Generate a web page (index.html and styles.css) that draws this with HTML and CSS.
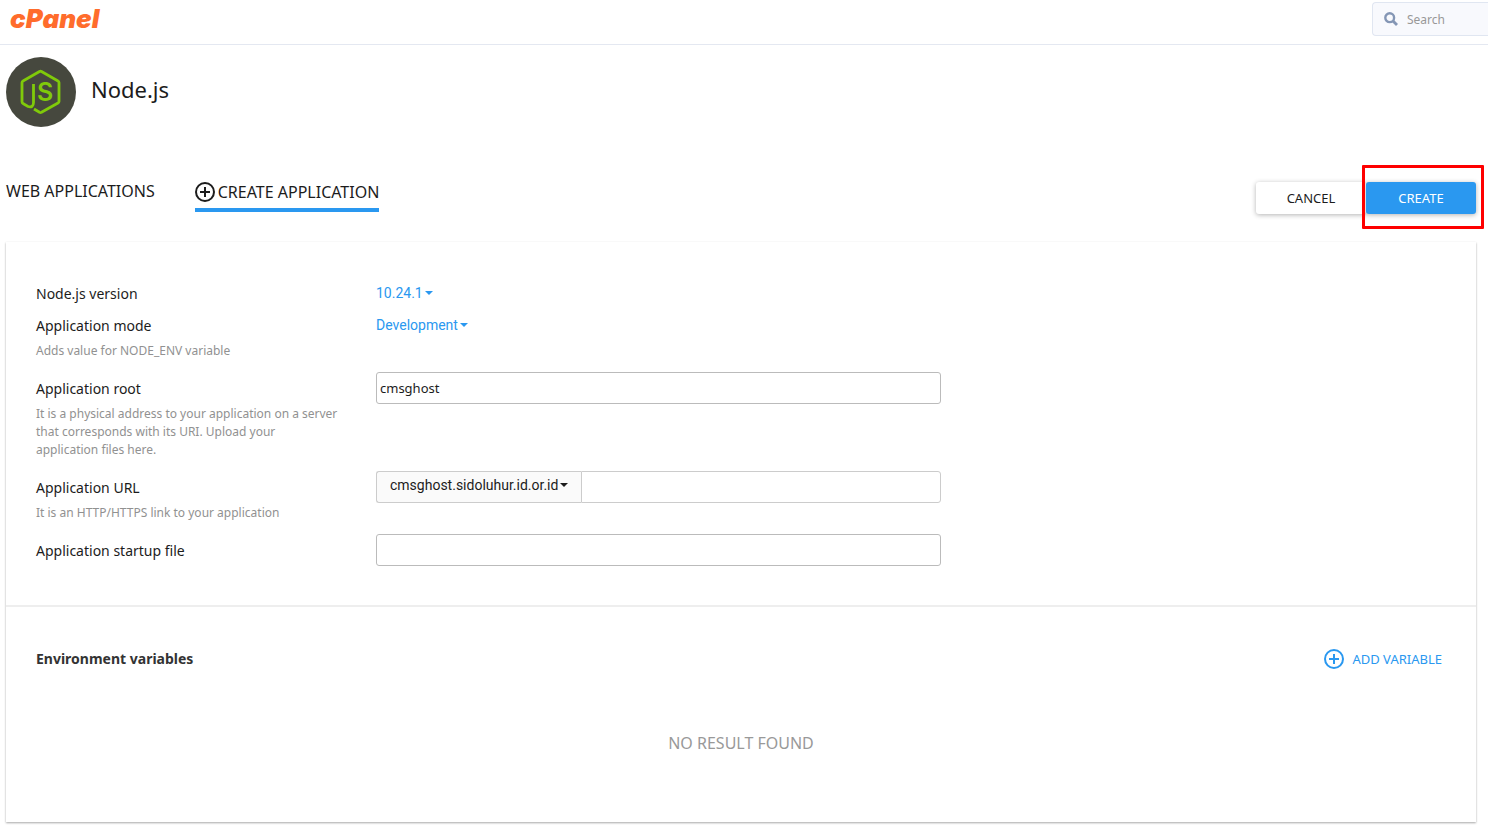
FILE: index.html
```html
<!DOCTYPE html>
<html lang="en">
<head>
<meta charset="UTF-8">
<title>cPanel - Node.js</title>
<meta name="viewport" content="width=device-width, initial-scale=1">
<link rel="stylesheet" href="styles.css">
</head>

<body>

<header class="topbar">
	<a class="logo" href="#">cPanel</a>
	<form class="search">
		<svg class="search-icon" viewBox="0 0 14 14" aria-hidden="true">
			<circle cx="5.7" cy="5.7" r="4.4" fill="none" stroke="currentColor" stroke-width="2.4"/>
			<path d="M9 9l4 4" stroke="currentColor" stroke-width="2.8"/>
		</svg>
		<input type="text" class="search-input" placeholder="Search" aria-label="Search">
	</form>
</header>

<main class="page">

	<div class="page-title">
		<svg class="app-icon" viewBox="0 0 70 70" aria-hidden="true">
			<circle cx="35" cy="35" r="35" fill="#46483e"/>
			<path d="M27.500 27V45.500Q27.500 51 22 49.500L17 46.500Q16 46 16 44.500V25.500Q16 24.500 17 24L33.500 14.500Q34.500 14 35.500 14.500L52 24Q53 24.500 53 25.500V44.500Q53 45.500 52 46L35.500 55.300Q34.500 55.800 33.500 55.300L28 52" fill="none" stroke="#80ca0a" stroke-width="2.800"/>
			<text class="app-icon-text" x="31" y="44">S</text>
		</svg>
		<h1>Node.js</h1>
	</div>

	<div class="toolbar">
		<nav class="tabs">
			<a class="tab" href="#">WEB APPLICATIONS</a>
			<a class="tab active" href="#">
				<svg class="plus" viewBox="0 0 20 20" aria-hidden="true">
					<circle cx="10" cy="10" r="9"/>
					<path d="M10 5v10M5 10h10"/>
				</svg>
				CREATE APPLICATION
			</a>
		</nav>
		<div class="buttons">
			<button type="button" class="btn">CANCEL</button>
			<div class="highlight">
				<button type="submit" form="appForm" class="btn btn-primary">CREATE</button>
			</div>
		</div>
	</div>

	<div class="panel">
		<form id="appForm" class="app-form">

			<div class="row">
				<div class="desc">
					<label for="version">Node.js version</label>
				</div>
				<div class="field">
					<span class="dropdown">
						<select id="version"><option>10.24.1</option></select>
					</span>
				</div>
			</div>

			<div class="row">
				<div class="desc">
					<label for="mode">Application mode</label>
					<p>Adds value for NODE_ENV variable</p>
				</div>
				<div class="field">
					<span class="dropdown">
						<select id="mode"><option>Development</option><option>Production</option></select>
					</span>
				</div>
			</div>

			<div class="row">
				<div class="desc">
					<label for="root">Application root</label>
					<p>It is a physical address to your application on a server that corresponds with its URI. Upload your application files here.</p>
				</div>
				<div class="field">
					<input type="text" id="root" class="textbox" value="cmsghost">
				</div>
			</div>

			<div class="row">
				<div class="desc">
					<label for="url">Application URL</label>
					<p>It is an HTTP/HTTPS link to your application</p>
				</div>
				<div class="field url-group">
					<span class="dropdown domain">
						<select aria-label="Domain"><option>cmsghost.sidoluhur.id.or.id</option></select>
					</span>
					<input type="text" id="url" class="textbox">
				</div>
			</div>

			<div class="row">
				<div class="desc">
					<label for="startup">Application startup file</label>
				</div>
				<div class="field">
					<input type="text" id="startup" class="textbox">
				</div>
			</div>

		</form>

		<section class="env">
			<div class="env-head">
				<h2>Environment variables</h2>
				<button type="button" class="add">
					<svg class="plus" viewBox="0 0 20 20" aria-hidden="true">
						<circle cx="10" cy="10" r="9"/>
						<path d="M10 5v10M5 10h10"/>
					</svg>
					ADD VARIABLE
				</button>
			</div>
			<p class="empty">NO RESULT FOUND</p>
		</section>
	</div>

</main>

</body>
</html>
```
FILE: styles.css
```css
* {
	box-sizing: border-box;
}

body {
	margin: 0;
	background: #fff;
	color: #1c1c1c;
	font-family: "Noto Sans", sans-serif;
	font-size: 14px;
	line-height: 20px;
}

h1, h2, p {
	margin: 0;
}

a {
	color: inherit;
	text-decoration: none;
}

button, input, select {
	font: inherit;
	color: inherit;
}

/* top bar */
.topbar {
	display: flex;
	justify-content: space-between;
	height: 45px;
	padding: 2px 0 0 10px;
	border-bottom: 1px solid #e4e8f1;
}

.logo {
	color: #ff6c2c;
	font-family: Inter, sans-serif;
	font-size: 26px;
	font-style: italic;
	font-weight: 900;
	line-height: 34px;
}

.search {
	display: flex;
	align-items: center;
	gap: 9px;
	width: 116px;
	height: 34px;
	padding-left: 11px;
	background: #f8f9fd;
	border: 1px solid #e0e6f1;
	border-right: 0;
	border-radius: 4px 0 0 4px;
}

.search-icon {
	flex: none;
	width: 14px;
	height: 14px;
	color: #8496b5;
}

.search-input {
	width: 100%;
	min-width: 0;
	padding: 2px 0 0;
	border: 0;
	background: none;
	font-size: 12px;
}

.search-input::placeholder {
	color: #989898;
}

/* title */
.page {
	padding: 12px 12px 5px 6px;
}

.page-title {
	display: flex;
	gap: 15px;
	height: 70px;
}

.app-icon {
	width: 70px;
	height: 70px;
}

.app-icon-text {
	fill: #80ca0a;
	font-family: Inter, sans-serif;
	font-size: 25px;
	font-weight: 600;
}

h1 {
	font-size: 22px;
	font-weight: 400;
	line-height: 64px;
}

/* tabs and buttons */
.toolbar {
	display: flex;
	justify-content: space-between;
	align-items: flex-start;
	padding: 53px 0 28px;
}

.tabs {
	display: flex;
	gap: 40px;
	font-size: 16px;
	line-height: 22px;
}

.tab {
	display: flex;
	align-items: center;
	gap: 3px;
	height: 32px;
	padding-bottom: 10px;
}

.tab.active {
	border-bottom: 4px solid #2a98f0;
	padding-bottom: 4px;
}

.plus {
	width: 20px;
	height: 20px;
	fill: none;
	stroke: currentColor;
	stroke-width: 2;
}

.buttons {
	display: flex;
	margin-top: 2px;
}

.btn {
	display: block;
	width: 110px;
	height: 32px;
	padding: 0;
	border: 0;
	border-radius: 3px;
	background: #fff;
	box-shadow: 0 1px 5px rgba(0, 0, 0, 0.3);
	font-size: 13px;
}

.btn-primary {
	background: #2a98f0;
	color: #fff;
}

.highlight {
	position: relative;
}

.highlight::after {
	content: "";
	position: absolute;
	top: -17px;
	right: -8px;
	bottom: -15px;
	left: -4px;
	border: 3px solid #fe0000;
	border-radius: 1px;
	pointer-events: none;
}

/* panel */
.panel {
	min-height: 580px;
	background: #fff;
	box-shadow: 0 1px 2px rgba(0, 0, 0, 0.35);
}

.app-form {
	padding: 35px 30px 39px;
	border-bottom: 2px solid #eee;
}

.row {
	display: grid;
	grid-template-columns: 304px minmax(0, 565px);
	column-gap: 36px;
}

.desc {
	padding: 7px 0 5px;
}

.desc label {
	display: block;
}

.desc p {
	padding: 6px 0 7px;
	color: #919191;
	font-size: 12px;
	line-height: 18px;
}

.dropdown {
	display: inline-flex;
	align-items: center;
	gap: 2px;
	height: 32px;
	color: #2a98f0;
	font-family: Roboto, sans-serif;
}

.dropdown select {
	appearance: none;
	field-sizing: content;
	padding: 0;
	border: 0;
	background: none;
}

.dropdown::after {
	content: "";
	border: 4px solid transparent;
	border-top-color: currentColor;
	border-bottom: 0;
}

.textbox {
	display: block;
	width: 100%;
	height: 32px;
	padding: 0 3px;
	border: 1px solid #bbb;
	border-radius: 3px;
	background: #fff;
	font-size: 13px;
}

.url-group {
	display: flex;
}

.domain {
	padding: 0 13px 4px;
	border: 1px solid #ccc;
	border-right: 0;
	border-radius: 3px 0 0 3px;
	background: #fafafa;
	color: #1c1c1c;
}

.url-group .textbox {
	flex: 1;
	min-width: 0;
	border-color: #ccc;
	border-radius: 0 3px 3px 0;
}

/* environment variables */
.env {
	padding: 42px 30px 40px;
}

.env-head {
	display: flex;
	justify-content: space-between;
	align-items: center;
	padding-right: 4px;
}

h2 {
	color: #333;
	font-size: 14px;
	font-weight: 700;
}

.add {
	display: flex;
	align-items: center;
	gap: 8px;
	padding: 0;
	border: 0;
	background: none;
	color: #2a98f0;
	font-size: 13px;
}

.empty {
	padding-top: 62px;
	color: #999;
	font-size: 16px;
	line-height: 24px;
	text-align: center;
}
```
